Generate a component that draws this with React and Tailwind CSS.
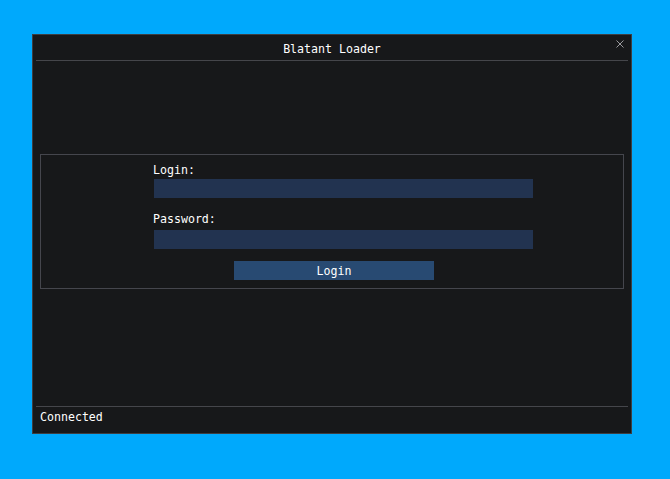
export default function App() {
  return (
    <div
      className="h-[479px] w-[670px] overflow-hidden bg-[#00a9fc] pl-[32px] pt-[34px] text-white"
      style={{ fontFamily: '"DejaVu Sans Mono", "Liberation Mono", monospace' }}
    >
      <div className="flex h-[400px] w-[600px] flex-col border border-[#3d3e42] bg-[#17181a] text-[11.6px] leading-[14px]">
        {/* title bar */}
        <div className="relative flex h-[25px] items-center justify-center pt-[2px]">
          <span>Blatant Loader</span>
          <svg
            className="absolute right-[7px] top-[5px] h-[8px] w-[8px]"
            viewBox="0 0 8 8"
            fill="none"
            stroke="#9a9a9e"
            strokeWidth="1"
          >
            <path d="M0.5 0.5 L7.5 7.5 M7.5 0.5 L0.5 7.5" />
          </svg>
        </div>
        <div className="mx-[3px] h-px bg-[#45464b]" />

        <div className="h-[93px]" />

        {/* login panel */}
        <div className="ml-[7px] h-[135px] w-[584px] border border-[#45464d] pl-[112px] pt-[5px]">
          <div className="h-[19px] pt-[3px]">Login:</div>
          <div className="ml-px h-[19px] w-[379px] bg-[#223350]" />
          <div className="mt-[13px] h-[19px] pt-[1px]">Password:</div>
          <div className="ml-px h-[19px] w-[379px] bg-[#223350]" />
          <button className="ml-[81px] mt-[12px] flex h-[19px] w-[200px] items-center justify-center bg-[#284a72]">
            Login
          </button>
        </div>

        <div className="flex-1" />

        {/* status bar */}
        <div className="mx-[3px] h-px bg-[#45464b]" />
        <div className="h-[26px] pl-[7px] pt-[3px]">Connected</div>
      </div>
    </div>
  )
}
